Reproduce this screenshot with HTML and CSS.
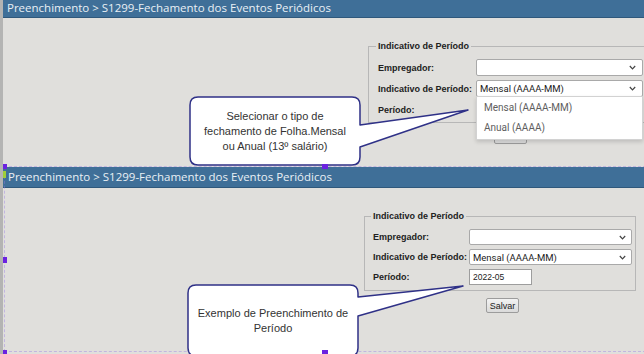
FILE: index.html
```html
<!DOCTYPE html>
<html lang="pt-BR">
<head>
<meta charset="utf-8">
<title>S1299 - Fechamento dos Eventos Periódicos</title>
<link rel="stylesheet" href="styles.css">
</head>
<body>
<div class="page">
  <div class="strip"></div>
  <main class="main">
    <section class="shot shot--top">
      <header class="banner banner--top">Preenchimento &gt; S1299-Fechamento dos Eventos Periódicos</header>
      <div class="area area--top">
        <div class="formcol">
          <fieldset class="box box--top">
            <legend>Indicativo de Período</legend>
            <div class="grid">
              <span class="lbl">Empregador:</span>
              <div class="select"><span class="val"></span><svg class="chev" viewBox="0 0 7 5" width="7" height="5"><polyline points="0.8,1 3.5,3.8 6.2,1" /></svg></div>
              <span class="lbl">Indicativo de Período:</span>
              <div class="select select--open"><span class="val">Mensal (AAAA-MM)</span><svg class="chev" viewBox="0 0 7 5" width="7" height="5"><polyline points="0.8,1 3.5,3.8 6.2,1" /></svg>
                <ul class="dropdown">
                  <li>Mensal (AAAA-MM)</li>
                  <li>Anual (AAAA)</li>
                </ul>
              </div>
              <span class="lbl">Período:</span>
              <div class="input input--top"></div>
            </div>
          </fieldset>
          <button class="btn btn--top" type="button">Salvar</button>
        </div>
        <svg class="callout-shape callout-shape--one" viewBox="0 0 285 72" width="285" height="72"><path d="M9,1 H163 Q171,1 171,9 V29 L279,14 L171,51 V61 Q171,69 163,69 H9 Q1,69 1,61 V9 Q1,1 9,1 Z"/></svg>
        <div class="callout-text callout-text--one">Selecionar o tipo de<br>fechamento de Folha.Mensal<br>ou Anual (13º salário)</div>
      </div>
    </section>
    <section class="shot shot--bottom">
      <header class="banner">Preenchimento &gt; S1299-Fechamento dos Eventos Periódicos</header>
      <div class="area area--bottom">
        <div class="formcol">
          <fieldset class="box box--bottom">
            <legend>Indicativo de Período</legend>
            <div class="grid">
              <span class="lbl">Empregador:</span>
              <div class="select"><span class="val"></span><svg class="chev" viewBox="0 0 7 5" width="7" height="5"><polyline points="0.8,1 3.5,3.8 6.2,1" /></svg></div>
              <span class="lbl">Indicativo de Período:</span>
              <div class="select"><span class="val">Mensal (AAAA-MM)</span><svg class="chev" viewBox="0 0 7 5" width="7" height="5"><polyline points="0.8,1 3.5,3.8 6.2,1" /></svg></div>
              <span class="lbl">Período:</span>
              <div class="input">2022-05</div>
            </div>
          </fieldset>
          <button class="btn btn--bottom" type="button">Salvar</button>
        </div>
        <svg class="callout-shape callout-shape--two" viewBox="0 0 285 76" width="285" height="76"><path d="M9,1 H163 Q171,1 171,9 V13 L276,2 L171,32 V64 Q171,72 163,72 H9 Q1,72 1,64 V9 Q1,1 9,1 Z"/></svg>
        <div class="callout-text callout-text--two">Exemplo de Preenchimento de<br>Período</div>
      </div>
    </section>
  </main>
  <div class="selframe"></div>
  <span class="handle handle--tl"></span>
  <span class="handle handle--tm"></span>
  <span class="handle handle--ml"></span>
  <span class="handle handle--bl"></span>
  <span class="handle handle--bm"></span>
  <span class="rot"></span>
</div>
</body>
</html>
```

FILE: styles.css
```css
* { box-sizing: border-box; }
html, body { margin: 0; padding: 0; }
body {
  width: 644px;
  height: 354px;
  overflow: hidden;
  background: #e0dfdc;
  font-family: "Liberation Sans", Arial, sans-serif;
}
.page {
  position: relative;
  display: flex;
  height: 354px;
}
.strip {
  width: 3px;
  flex: none;
  background: #b4b4b3;
}
.main {
  flex: 1;
  min-width: 0;
  display: flex;
  flex-direction: column;
  overflow: hidden;
}
.shot {
  display: flex;
  flex-direction: column;
}
.shot--top { height: 167px; flex: none; }
.shot--bottom { flex: 1; }

.banner {
  background: #3f6f98;
  color: #e9eff5;
  font-family: "Open Sans", sans-serif;
  font-size: 11.5px;
  line-height: 14px;
  padding: 3px 0 3px 5px;
  border-bottom: 1px solid #2f587b;
  white-space: nowrap;
}
.banner--top { padding: 1px 0 2px 4px; }

.area {
  position: relative;
  flex: 1;
}
.area--top { padding: 22px 0 0 365px; }
.area--bottom { padding: 22px 0 0 361px; }

.formcol {
  display: flex;
  flex-direction: column;
  align-items: center;
  width: max-content;
}

.box {
  margin: 0;
  min-width: 0;
  border: 1px solid #b7b7b7;
  padding: 7px 3px 4px 9px;
}
.box--top { padding: 7px 6px 4px 9px; }
.box--bottom { padding: 7px 3px 5px 8px; }

.box legend {
  font-size: 9px;
  line-height: 12px;
  font-weight: bold;
  color: #222;
  padding: 0 2px;
  margin-left: -2px;
}

.grid {
  display: grid;
  grid-template-columns: 98px 167px;
  grid-auto-rows: 17px;
  row-gap: 4px;
  align-items: center;
}
.box--bottom .grid {
  grid-template-columns: 96px 163px;
  grid-auto-rows: 16px;
}

.lbl {
  font-size: 9px;
  font-weight: bold;
  color: #222;
  white-space: nowrap;
}

.select {
  position: relative;
  height: 100%;
  display: flex;
  align-items: center;
  background: #fff;
  border: 1px solid #a9a9a9;
  border-radius: 2px;
  padding: 0 6px 0 3px;
  font-family: Roboto, sans-serif;
  font-size: 9.5px;
  color: #222;
}
.box--bottom .select { padding: 0 5px 0 3px; }
.val { flex: 1; white-space: nowrap; }
.chev {
  flex: none;
  fill: none;
  stroke: #444;
  stroke-width: 1.2;
}

.dropdown {
  position: absolute;
  z-index: 3;
  top: 100%;
  left: -1px;
  right: -1px;
  margin: 0;
  padding: 1px 0;
  list-style: none;
  background: #fff;
  border: 1px solid #d2d2d2;
  box-shadow: 0 2px 4px rgba(0, 0, 0, 0.15);
}
.dropdown li {
  height: 20px;
  line-height: 20px;
  padding-left: 7px;
  font-family: Roboto, sans-serif;
  font-size: 10px;
  color: #5e5e5e;
}

.input {
  width: 63px;
  height: 100%;
  background: #fff;
  border: 1px solid #9d9d9d;
  padding: 0 3px;
  font-size: 8.5px;
  line-height: 14px;
  color: #222;
}
.input--top { width: 64px; }

.btn {
  width: 33px;
  height: 15px;
  padding: 0;
  margin-left: 5px;
  border: 1px solid #9c9c9c;
  border-radius: 2px;
  background: linear-gradient(#f3f3f3, #dadada);
  font-family: "Liberation Sans", Arial, sans-serif;
  font-size: 9px;
  color: #222;
}
.btn--top { margin-top: 6px; margin-left: 3px; }
.btn--bottom { margin-top: 7px; }

.callout-shape {
  position: absolute;
  z-index: 4;
  overflow: visible;
}
.callout-shape path {
  fill: #fff;
  stroke: #2f3187;
  stroke-width: 1.5;
  stroke-linejoin: round;
}
.callout-shape--one { left: 186px; top: 78px; }
.callout-shape--two { left: 184px; top: 96px; }

.callout-text {
  position: absolute;
  z-index: 5;
  width: 170px;
  display: flex;
  align-items: center;
  justify-content: center;
  text-align: center;
  font-family: "Liberation Sans", Arial, sans-serif;
  font-size: 11px;
  line-height: 15px;
  color: #333;
}
.callout-text--one { left: 187px; top: 79px; height: 68px; }
.callout-text--two { left: 185px; top: 97px; height: 71px; }

.selframe {
  position: absolute;
  left: 4px;
  top: 166px;
  right: -2px;
  bottom: 2px;
  border: 1px dashed rgba(150, 120, 230, 0.4);
  pointer-events: none;
}
.handle {
  position: absolute;
  z-index: 6;
  width: 4px;
  height: 5px;
  background: #6b22e0;
}
.handle--tl { left: 3px; top: 164px; }
.handle--tm { left: 322px; top: 164px; width: 6px; }
.handle--ml { left: 3px; top: 257px; height: 6px; }
.handle--bl { left: 3px; top: 350px; }
.handle--bm { left: 322px; top: 350px; width: 6px; }
.rot {
  position: absolute;
  z-index: 6;
  left: 3px;
  top: 171px;
  width: 3px;
  height: 7px;
  background: #9fcf3a;
}
```
